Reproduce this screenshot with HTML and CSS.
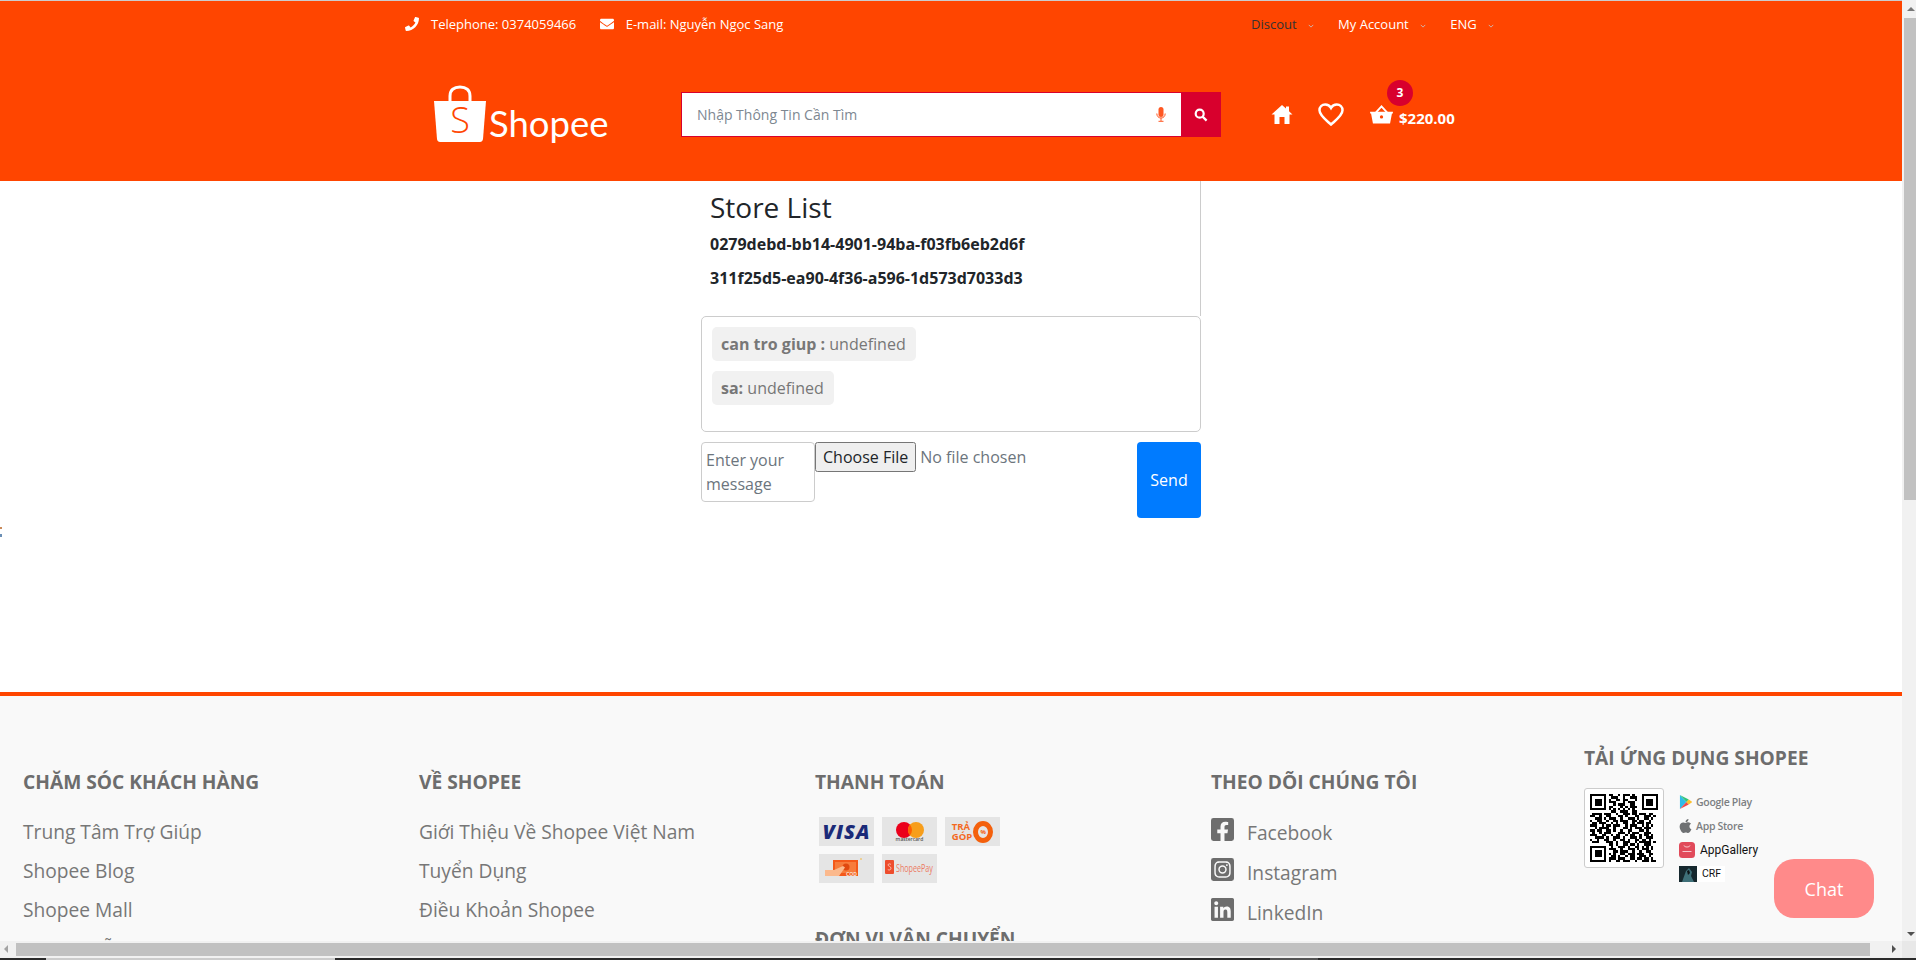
FILE: index.html
```html
<!DOCTYPE html>
<html lang="en">
<head>
  <meta charset="UTF-8" />
  <meta name="viewport" content="width=device-width, initial-scale=1.0"/>
  <title>Shopee Chat</title>
  <link rel="stylesheet" href="styles.css">
</head>
<body>
  <div class="window">
    <div class="window-main">
      <div class="page">
        <header class="site-header">
          <div class="topbar">
            <div class="topbar-left">
              <span class="contact">
                <svg class="contact-icon" viewBox="0 0 512 512"><path d="M493.4 24.6l-104-24c-11.3-2.6-22.9 3.3-27.5 13.9l-48 112c-4.2 9.8-1.4 21.3 6.9 28l60.6 49.6c-36 76.7-98.9 140.5-177.2 177.2l-49.6-60.6c-6.8-8.3-18.2-11.1-28-6.9l-112 48C3.9 366.5-2 378.1.6 389.4l24 104C27.1 504.2 36.7 512 48 512c256.1 0 464-207.5 464-464 0-11.2-7.7-20.9-18.6-23.4z"/></svg>
                Telephone: 0374059466
              </span>
              <span class="contact">
                <svg class="contact-icon" viewBox="0 0 512 512"><path d="M502.3 190.8c3.9-3.1 9.7-.2 9.7 4.7V400c0 26.5-21.5 48-48 48H48c-26.5 0-48-21.5-48-48V195.6c0-5 5.7-7.8 9.7-4.7 22.4 17.4 52.1 39.5 154.1 113.6 21.1 15.4 56.7 47.8 92.2 47.6 35.7.3 72-32.8 92.3-47.6 102-74.1 131.6-96.3 154-113.7zM256 320c23.2.4 56.6-29.2 73.4-41.4 132.7-96.3 142.8-104.7 173.4-128.7 5.8-4.5 9.2-11.5 9.2-18.9v-19c0-26.5-21.5-48-48-48H48C21.5 64 0 85.5 0 112v19c0 7.4 3.4 14.3 9.2 18.9 30.6 23.9 40.7 32.4 173.4 128.7 16.8 12.2 50.2 41.8 73.4 41.4z"/></svg>
                E-mail: Nguyễn Ngọc Sang
              </span>
            </div>
            <div class="topbar-right">
              <span class="top-menu top-menu-dark">Discout <svg class="caret" viewBox="0 0 8 5"><path d="M1 1l3 3 3-3"/></svg></span>
              <span class="top-menu">My Account <svg class="caret" viewBox="0 0 8 5"><path d="M1 1l3 3 3-3"/></svg></span>
              <span class="top-menu">ENG <svg class="caret" viewBox="0 0 8 5"><path d="M1 1l3 3 3-3"/></svg></span>
            </div>
          </div>
          <div class="header-main">
            <div class="logo">
              <svg class="logo-bag" viewBox="0 0 52 58">
                <path class="logo-handle" d="M16 17V11C16 5 20 2 26 2s10 3 10 9v6"/>
                <path class="logo-body" d="M0 16h52l-3 38c-.2 2-1.6 3-3 3H6c-1.5 0-2.8-1-3-3z"/>
                <text class="logo-s" x="26" y="48" text-anchor="middle">S</text>
              </svg>
              <span class="logo-text">Shopee</span>
            </div>
            <form class="search">
              <input class="search-input" type="text" placeholder="Nhập Thông Tin Cần Tìm" />
              <svg class="search-mic" viewBox="0 0 10 15"><rect x="2.5" y="0" width="5" height="10" rx="2.5"/><path d="M.8 6.500c0 2.800 1.800 4.500 4.200 4.500s4.200-1.700 4.200-4.500M5 11v3M2.500 14.300h5"/></svg>
              <button class="search-btn" type="button">
                <svg viewBox="0 0 14 14"><circle cx="5.7" cy="5.7" r="4"/><path d="M8.600 8.600l4 4"/></svg>
              </button>
            </form>
            <div class="header-icons">
              <svg class="icon-home" viewBox="0 0 21 19"><path d="M10.500 0l4 3.600V1.500h3v4.800L21 9.500h-3V19h-5v-7H8v7H3V9.500H0z"/></svg>
              <svg class="icon-heart" viewBox="0 0 26 23"><path d="M13 21.500C8 17 1.500 12.500 1.500 7.300 1.500 4 4 1.500 7.200 1.500c2.400 0 4.600 1.300 5.800 3.500 1.200-2.200 3.400-3.500 5.800-3.500C22 1.500 24.500 4 24.500 7.300c0 5.200-6.500 9.700-11.500 14.200z"/></svg>
              <div class="cart">
                <svg class="icon-basket" viewBox="0 0 24 20"><path d="M0 7h24v2h-1l-2 10.500H3L1 9H0z"/><path class="basket-handle" d="M6 8l6-6.500L18 8"/><circle class="basket-dot" cx="12" cy="12.500" r="1.700"/></svg>
                <span class="cart-total">$220.00</span>
                <span class="cart-badge">3</span>
              </div>
            </div>
          </div>
        </header>

        <main class="chat">
          <section class="store-list">
            <h3 class="store-title">Store List</h3>
            <p class="store-id">0279debd-bb14-4901-94ba-f03fb6eb2d6f</p>
            <p class="store-id">311f25d5-ea90-4f36-a596-1d573d7033d3</p>
          </section>
          <section class="messages">
            <div class="message"><strong>can tro giup :</strong> undefined</div>
            <div class="message"><strong>sa:</strong> undefined</div>
          </section>
          <form class="chat-form">
            <textarea class="chat-input" placeholder="Enter your message"></textarea>
            <input class="chat-file" type="file" />
            <button class="chat-send" type="button">Send</button>
          </form>
        </main>

        <footer class="site-footer">
          <div class="footer-col">
            <h4 class="footer-title">CHĂM SÓC KHÁCH HÀNG</h4>
            <a class="footer-link" href="#">Trung Tâm Trợ Giúp</a>
            <a class="footer-link" href="#">Shopee Blog</a>
            <a class="footer-link" href="#">Shopee Mall</a>
            <a class="footer-link" href="#">Hướng Dẫn Mua Hàng</a>
          </div>
          <div class="footer-col">
            <h4 class="footer-title">VỀ SHOPEE</h4>
            <a class="footer-link" href="#">Giới Thiệu Về Shopee Việt Nam</a>
            <a class="footer-link" href="#">Tuyển Dụng</a>
            <a class="footer-link" href="#">Điều Khoản Shopee</a>
          </div>
          <div class="footer-col">
            <h4 class="footer-title">THANH TOÁN</h4>
            <div class="pay-grid">
              <div class="pay-tile"><span class="pay-visa">VISA</span></div>
              <div class="pay-tile pay-tile-master">
                <svg class="pay-master" viewBox="0 0 28 16"><circle cx="8" cy="8" r="8" fill="#eb001b"/><circle cx="20" cy="8" r="8" fill="#f79e1b"/><path d="M14 2.700a8 8 0 0 1 0 10.600 8 8 0 0 1 0-10.600z" fill="#ff5f00"/></svg>
                <span class="pay-master-text">mastercard</span>
              </div>
              <div class="pay-tile pay-tile-tra"><span class="pay-tra">TRẢ<br>GÓP</span><span class="pay-zero"><span>%</span></span></div>
              <div class="pay-tile">
                <svg class="pay-cod" viewBox="0 0 55 29"><rect x="14" y="6" width="25" height="16" fill="#f4591a"/><rect x="16" y="8" width="21" height="11" fill="#f77c3c"/><circle cx="27" cy="13" r="3.5" fill="#e0490f"/><path d="M6 16h9l9-4 2 1.500-6 8.500H6z" fill="#fbb98d"/><circle cx="42" cy="5" r=".8" fill="#f7b733"/></svg>
                <span class="pay-cod-text">COD</span>
              </div>
              <div class="pay-tile pay-tile-sp">
                <svg class="pay-sp-icon" viewBox="0 0 9 14"><rect width="9" height="14" rx="1" fill="#ee4d2d"/><path d="M6 4.500C5 3.500 3 3.700 3 5s3 1.400 3 3.200S4 10.500 2.800 9.500" fill="none" stroke="#fbd3c4" stroke-width=".8"/></svg>
                <span class="pay-sp">ShopeePay</span>
              </div>
            </div>
            <h4 class="footer-title footer-title-ship">ĐƠN VỊ VẬN CHUYỂN</h4>
          </div>
          <div class="footer-col">
            <h4 class="footer-title">THEO DÕI CHÚNG TÔI</h4>
            <a class="social" href="#">
              <svg class="social-icon" viewBox="0 32 448 448"><path d="M400 32H48A48 48 0 0 0 0 80v352a48 48 0 0 0 48 48h137.25V327.69h-63V256h63v-54.64c0-62.15 37-96.48 93.67-96.48 27.14 0 55.52 4.84 55.52 4.84v61h-31.27c-30.81 0-40.42 19.12-40.42 38.73V256h68.78l-11 71.69h-57.78V480H400a48 48 0 0 0 48-48V80a48 48 0 0 0-48-48z"/></svg>
              Facebook
            </a>
            <a class="social" href="#">
              <svg class="social-icon" viewBox="0 32 448 448"><path d="M224,202.66A53.34,53.34,0,1,0,277.36,256,53.38,53.38,0,0,0,224,202.66Zm124.71-41a54,54,0,0,0-30.41-30.41c-21-8.29-71-6.43-94.3-6.43s-73.25-1.93-94.31,6.43a54,54,0,0,0-30.41,30.41c-8.28,21-6.43,71.05-6.43,94.33S91,329.26,99.32,350.33a54,54,0,0,0,30.41,30.41c21,8.29,71,6.43,94.31,6.43s73.24,1.93,94.3-6.43a54,54,0,0,0,30.41-30.41c8.35-21,6.43-71.05,6.43-94.33S357.1,182.74,348.75,161.67ZM224,338a82,82,0,1,1,82-82A81.9,81.9,0,0,1,224,338Zm85.38-148.3a19.14,19.14,0,1,1,19.13-19.14A19.1,19.1,0,0,1,309.42,189.74ZM400,32H48A48,48,0,0,0,0,80V432a48,48,0,0,0,48,48H400a48,48,0,0,0,48-48V80A48,48,0,0,0,400,32ZM382.88,322c-1.29,25.63-7.14,48.34-25.85,67s-41.4,24.63-67,25.85c-26.41,1.49-105.59,1.49-132,0-25.63-1.29-48.26-7.15-67-25.85s-24.63-41.42-25.85-67c-1.49-26.42-1.49-105.61,0-132,1.29-25.63,7.07-48.34,25.85-67s41.47-24.56,67-25.78c26.41-1.49,105.59-1.49,132,0,25.63,1.29,48.33,7.15,67,25.85s24.63,41.42,25.85,67.07C384.37,216.44,384.37,295.56,382.88,322Z"/></svg>
              Instagram
            </a>
            <a class="social" href="#">
              <svg class="social-icon" viewBox="0 32 448 448"><path d="M416 32H31.9C14.3 32 0 46.5 0 64.3v383.4C0 465.5 14.3 480 31.9 480H416c17.6 0 32-14.5 32-32.3V64.3c0-17.8-14.4-32.3-32-32.3zM135.4 416H69V202.2h66.5V416zm-33.2-243c-21.3 0-38.5-17.3-38.5-38.5S80.9 96 102.2 96c21.2 0 38.5 17.3 38.5 38.5 0 21.3-17.2 38.5-38.5 38.5zm282.1 243h-66.4V312c0-24.8-.5-56.7-34.5-56.7-34.6 0-39.9 27-39.9 54.9V416h-66.4V202.2h63.7v29.2h.9c8.9-16.8 30.6-34.5 62.9-34.5 67.2 0 79.7 44.3 79.7 101.9V416z"/></svg>
              LinkedIn
            </a>
          </div>
          <div class="footer-col footer-col-app">
            <h4 class="footer-title">TẢI ỨNG DỤNG SHOPEE</h4>
            <div class="app-row">
              <div class="qr">
                <svg viewBox="0 0 29 29" shape-rendering="crispEdges">
                  <path fill-rule="evenodd" d="M0 0h7v7H0zM1 1v5h5V1zM22 0h7v7h-7zM23 1v5h5V1zM0 22h7v7H0zM1 23v5h5v-5z"/>
                  <path d="M2 2h3v3H2zM24 2h3v3h-3zM2 24h3v3H2z"/>
                  <path class="qr-data" d="M8 .5h2m2 0h1m1 0h3m1 0h1M9 1.500h3m2 0h1m2 0h3M8 2.500h1m2 0h2m1 0h2m3 0h1M8 3.500h3m3 0h1m1 0h3M10 4.500h1m1 0h3m2 0h2M8 5.500h2m3 0h1m1 0h1m1 0h3M8 6.500h1m1 0h1m1 0h1m1 0h1m1 0h1m1 0h1M9 7.500h2m2 0h3m2 0h2M1 8.500h4m1 0h3m2 0h1m2 0h3m1 0h2m1 0h3m1 0h2M0 9.500h2m2 0h1m2 0h2m3 0h2m1 0h1m3 0h2m2 0h3m1 0h1M2 10.500h3m1 0h1m1 0h3m2 0h1m2 0h3m1 0h1m2 0h2m1 0h1M0 11.500h1m2 0h2m2 0h1m2 0h2m1 0h3m2 0h2m1 0h2m2 0h1M1 12.500h2m1 0h3m2 0h1m1 0h1m2 0h2m2 0h1m1 0h3m1 0h2M0 13.500h3m2 0h1m1 0h2m1 0h3m2 0h1m1 0h3m2 0h1m1 0h1m1 0h1M2 14.500h1m1 0h4m2 0h1m3 0h2m1 0h1m1 0h3m1 0h3M0 15.500h2m1 0h2m2 0h2m1 0h1m2 0h1m2 0h2m3 0h2m1 0h1M1 16.500h1m2 0h1m1 0h3m3 0h3m1 0h1m1 0h3m2 0h3M0 17.500h3m2 0h2m2 0h1m1 0h2m2 0h1m1 0h2m2 0h1m1 0h2m1 0h1M2 18.500h4m1 0h1m2 0h3m1 0h1m2 0h3m1 0h1m2 0h3M0 19.500h1m2 0h1m2 0h2m2 0h1m2 0h2m1 0h1m2 0h2m1 0h2m1 0h1M1 20.500h3m3 0h3m1 0h1m2 0h3m2 0h1m1 0h5m1 0h1M8 21.500h2m1 0h1m2 0h2m1 0h2m1 0h1m2 0h3M9 22.500h1m2 0h3m1 0h1m2 0h2m1 0h1m1 0h1m1 0h1M8 23.500h3m2 0h1m2 0h3m1 0h1m1 0h3m1 0h1M10 24.500h2m1 0h3m2 0h1m2 0h1m2 0h2M8 25.500h1m1 0h1m2 0h2m1 0h3m1 0h3m2 0h2M9 26.500h2m1 0h1m2 0h1m1 0h2m2 0h3m1 0h1M8 27.500h3m1 0h3m2 0h2m1 0h2m1 0h2m1 0h1M8 28.500h1m2 0h2m1 0h3m2 0h1m2 0h3m1 0h2"/>
                </svg>
              </div>
              <div class="stores">
                <div class="store-row">
                  <svg class="store-icon" viewBox="1 1 14 15"><path d="M2 1l7 7.500L2 16z" fill="#2fbce9"/><path d="M2 1l9.500 4.800L9 8.500z" fill="#34c37a"/><path d="M2 16l9.500-4.800L9 8.500z" fill="#ee4a4a"/><path d="M11.500 5.800l4 2.700-4 2.700L9 8.500z" fill="#fbc02d"/></svg>
                  <span class="store-name">Google Play</span>
                </div>
                <div class="store-row">
                  <svg class="store-icon" viewBox="0 0 384 512"><path fill="#6f7173" d="M318.7 268.7c-.2-36.7 16.4-64.4 50-84.8-18.8-26.9-47.2-41.7-84.7-44.6-35.5-2.800-74.3 20.7-88.5 20.7-15 0-49.4-19.7-76.4-19.7C63.3 141.2 4 184.8 4 273.5q0 39.3 14.4 81.2c12.8 36.7 59 126.7 107.2 125.2 25.2-.6 43-17.9 75.8-17.9 31.8 0 48.3 17.9 76.4 17.9 48.6-.7 90.4-82.5 102.6-119.3-65.2-30.7-61.7-90-61.7-91.9zm-56.6-164.2c27.3-32.4 24.8-61.9 24-72.5-24.1 1.4-52 16.4-67.9 34.9-17.5 19.8-27.8 44.3-25.6 71.9 26.1 2 49.9-11.4 69.5-34.3z"/></svg>
                  <span class="store-name">App Store</span>
                </div>
                <div class="store-row">
                  <svg class="gallery-icon" viewBox="0 0 16 16"><rect width="16" height="16" rx="3.5" fill="#e14a5a"/><path d="M5 3.500c.5 2 5.500 2 6 0" fill="none" stroke="#fff" stroke-width=".7"/><path d="M3.500 9.500h9" stroke="#fbd7da" stroke-width=".9"/></svg>
                  <span class="store-name store-name-dark">AppGallery</span>
                </div>
                <div class="store-row">
                  <svg class="store-icon-crf" viewBox="0 0 18 16"><rect width="18" height="16" fill="#16282e"/><path d="M3 16L7 5l3-3 3 4-1 4 3 6z" fill="#3e6f78"/><path d="M8 5l2-1 1 3-2 2z" fill="#0c1215"/></svg>
                  <span class="store-name store-name-crf">CRF</span>
                </div>
              </div>
            </div>
          </div>
        </footer>
      </div>
      <div class="vscroll">
        <span class="arrow arrow-up"></span>
        <div class="vscroll-thumb"></div>
        <span class="arrow arrow-down"></span>
      </div>
    </div>
    <div class="hscroll">
      <span class="arrow arrow-left"></span>
      <div class="hscroll-thumb"></div>
      <span class="arrow arrow-right"></span>
      <div class="hscroll-corner"></div>
    </div>
    <div class="strip">
      <span class="strip-a"></span>
      <span class="strip-b"></span>
      <span class="strip-c"></span>
      <span class="strip-d"></span>
      <span class="strip-e"></span>
    </div>
  </div>
  <button class="chat-bubble" type="button">Chat</button>
  <span class="edge-mark edge-mark-a"></span>
  <span class="edge-mark edge-mark-b"></span>
</body>
</html>
```

FILE: styles.css
```css
* {
  box-sizing: border-box;
  font-family: 'Open Sans', 'Noto Sans', sans-serif;
}

body {
  margin: 0;
  height: 960px;
  overflow: hidden;
  background: #fff;
}

.window {
  height: 960px;
  display: flex;
  flex-direction: column;
}

.window-main {
  display: flex;
  height: 941px;
}

.page {
  flex: 1;
  min-width: 0;
  overflow: hidden;
}

/* header */
.site-header {
  height: 181px;
  border-top: 1px solid #ccc;
  background: #ff4500;
  color: #fff;
}

.topbar {
  height: 46px;
  padding: 0 0 0 405px;
  display: flex;
  align-items: center;
  font-size: 13px;
}

.topbar-left {
  display: flex;
  gap: 23.5px;
  width: 846px;
}

.contact {
  display: flex;
  align-items: center;
  gap: 12px;
}

.contact-icon {
  width: 14px;
  height: 14px;
  fill: #fff;
}

.topbar-right {
  display: flex;
  gap: 24.5px;
}

.top-menu {
  display: flex;
  align-items: center;
  gap: 10px;
  font-size: 13px;
}

.top-menu-dark {
  color: #333;
}

.caret {
  width: 6px;
  height: 4px;
  margin-top: 3px;
  margin-left: 1px;
  fill: none;
  stroke: #c9bcb6;
  stroke-width: 1.2;
}

.header-main {
  display: flex;
  align-items: flex-start;
  height: 134px;
  padding-left: 434px;
}

.logo {
  display: flex;
  align-items: flex-start;
  width: 247px;
  height: 62px;
  margin-top: 38px;
}

.logo-bag {
  width: 52px;
  height: 58px;
  flex: none;
}

.logo-handle {
  fill: none;
  stroke: #fff;
  stroke-width: 3;
}

.logo-body {
  fill: #fff;
}

.logo-s {
  font-size: 36px;
  font-weight: 300;
  fill: #ff4500;
}

.logo-text {
  font-family: 'Lato', sans-serif;
  font-size: 36.5px;
  font-weight: 400;
  line-height: 38px;
  margin-top: 19px;
  margin-left: 3px;
}

.search {
  position: relative;
  display: flex;
  width: 540px;
  height: 45px;
  margin-top: 45px;
}

.search-input {
  flex: 1;
  height: 45px;
  padding: 0 40px 0 15px;
  border: 1px solid #d8002d;
  border-right: none;
  outline: none;
  background: #fff;
  font-size: 14px;
  color: #495057;
}

.search-input::placeholder {
  color: #7d8791;
}

.search-mic {
  position: absolute;
  right: 55px;
  top: 15px;
  width: 10px;
  height: 15px;
  fill: #ff5722;
  stroke: #ff5722;
  stroke-width: 0;
}

.search-mic path {
  fill: none;
  stroke-width: 1;
}

.search-btn {
  width: 40px;
  height: 45px;
  padding: 0;
  border: none;
  background: #d8002d;
  display: flex;
  align-items: center;
  justify-content: center;
}

.search-btn svg {
  width: 14px;
  height: 14px;
  fill: none;
  stroke: #fff;
  stroke-width: 2.2;
}

.header-icons {
  display: flex;
  align-items: center;
  height: 45px;
  margin-top: 45px;
  margin-left: 50px;
}

.icon-home {
  width: 22px;
  height: 19px;
  fill: #fff;
}

.icon-heart {
  width: 26px;
  height: 23px;
  margin-left: 25px;
  fill: none;
  stroke: #fff;
  stroke-width: 2.5;
}

.cart {
  position: relative;
  display: flex;
  align-items: center;
  margin-left: 26px;
}

.icon-basket {
  width: 23px;
  height: 19px;
  fill: #fff;
}

.basket-handle {
  fill: none;
  stroke: #fff;
  stroke-width: 2;
}

.basket-dot {
  fill: #ff4500;
}

.cart-total {
  margin-left: 6px;
  margin-top: 7px;
  font-size: 15px;
  font-weight: 700;
}

.cart-badge {
  position: absolute;
  left: 17px;
  top: -21px;
  width: 26px;
  height: 26px;
  border-radius: 50%;
  background: #d8002d;
  font-size: 12px;
  font-weight: 700;
  line-height: 26px;
  text-align: center;
}

/* chat */
.chat {
  width: 500px;
  height: 511px;
  margin: 0 auto;
}

.store-list {
  height: 135px;
  padding-left: 9px;
  border-right: 1px solid #ccc;
  color: #212529;
}

.store-title {
  margin: 0 0 -1px;
  font-size: 28px;
  font-weight: 400;
  line-height: 52px;
}

.store-id {
  margin: 0 0 10px;
  font-size: 16px;
  font-weight: 700;
  line-height: 24px;
}

.messages {
  height: 116px;
  padding: 10px;
  border: 1px solid #ccc;
  border-radius: 5px;
  display: flex;
  flex-direction: column;
  align-items: flex-start;
  gap: 10px;
}

.message {
  height: 34px;
  padding: 0 10px 0 9px;
  border-radius: 5px;
  background: #f1f1f1;
  color: #777;
  font-size: 16px;
  line-height: 34px;
}

.chat-form {
  display: flex;
  align-items: flex-start;
  margin-top: 10px;
}

.chat-input {
  width: 114px;
  height: 60px;
  padding: 5px 4px;
  border: 1px solid #ccc;
  border-radius: 4px;
  outline: none;
  resize: none;
  font-size: 16px;
  line-height: 24px;
  color: #495057;
}

.chat-input::placeholder {
  color: #6c757d;
}

.chat-file {
  flex: 1;
  min-width: 0;
  font-size: 16px;
  color: #6c757d;
}

.chat-file::file-selector-button {
  height: 30px;
  margin-right: 4px;
  font-family: 'Open Sans', sans-serif;
  font-size: 16px;
  color: #212529;
}

.chat-send {
  width: 64px;
  height: 76px;
  border: none;
  border-radius: 4px;
  background: #007bff;
  color: #fff;
  font-size: 16px;
}

/* footer */
.site-footer {
  display: flex;
  border-top: 4px solid #ff4500;
  background: #f9f9f9;
  height: 400px;
  padding: 0 0 0 23px;
}

.footer-col {
  width: 396px;
  padding-top: 72px;
  flex: none;
}

.footer-col-app {
  width: 300px;
  margin-left: -23px;
  padding-top: 48px;
}

.footer-title {
  margin: 0 0 16px;
  font-size: 19.2px;
  font-weight: 700;
  line-height: 28px;
  color: #6d6d6d;
}

.footer-link {
  display: block;
  height: 39px;
  font-size: 19.2px;
  line-height: 39px;
  color: #777;
  text-decoration: none;
}

.pay-grid {
  display: grid;
  grid-template-columns: repeat(3, 55px);
  grid-auto-rows: 29px;
  gap: 8px;
  margin-left: 4px;
  margin-top: 21px;
}

.pay-tile {
  position: relative;
  display: flex;
  flex-direction: column;
  align-items: center;
  justify-content: center;
  background: #e5e5e5;
  overflow: hidden;
}

.pay-visa {
  font-size: 20px;
  font-weight: 800;
  font-style: italic;
  letter-spacing: 1px;
  color: #1a2a78;
  line-height: 1;
}

.pay-tile-master {
  justify-content: flex-start;
  padding-top: 5px;
}

.pay-master {
  width: 28px;
  height: 16px;
}

.pay-master-text {
  position: absolute;
  bottom: 4px;
  font-size: 5px;
  font-weight: 600;
  color: #555;
  line-height: 1;
}

.pay-tile-tra {
  flex-direction: row;
  gap: 1px;
}

.pay-tra {
  font-size: 9.5px;
  font-weight: 700;
  line-height: 10px;
  color: #f4691e;
}

.pay-zero {
  width: 20px;
  height: 22px;
  border: 5px solid #f4600c;
  border-radius: 50%;
  display: flex;
  align-items: center;
  justify-content: center;
}

.pay-zero span {
  font-size: 6px;
  line-height: 8px;
  font-weight: 700;
  color: #f4600c;
}

.pay-cod {
  width: 55px;
  height: 29px;
}

.pay-cod-text {
  position: absolute;
  left: 27px;
  top: 18px;
  font-size: 5px;
  font-weight: 700;
  color: #f9e0d2;
  line-height: 1;
}

.pay-tile-sp {
  flex-direction: row;
  justify-content: flex-start;
  gap: 2px;
  padding-left: 3px;
}

.pay-sp-icon {
  width: 9px;
  height: 14px;
  margin-bottom: 3px;
  flex: none;
}

.pay-sp {
  margin-bottom: 3px;
  font-size: 11px;
  color: #ec7a62;
  transform: scaleX(0.65);
  transform-origin: left center;
}

.footer-title-ship {
  margin-top: 42px;
}

.social {
  display: flex;
  align-items: center;
  gap: 13px;
  height: 40px;
  font-size: 19.2px;
  color: #777;
  text-decoration: none;
}

.social-icon {
  width: 23px;
  height: 23px;
  margin-bottom: 5px;
  fill: #6d6d6d;
  flex: none;
}

.app-row {
  display: flex;
  gap: 15px;
  margin-top: 1px;
}

.qr {
  width: 80px;
  height: 80px;
  padding: 5px;
  border: 1px solid #ccc;
  border-radius: 3px;
  background: #fff;
}

.qr svg {
  display: block;
  width: 68px;
  height: 68px;
}

.qr-data {
  fill: none;
  stroke: #000;
  stroke-width: 1;
}

.stores {
  display: flex;
  flex-direction: column;
  gap: 8px;
  margin-top: 6px;
}

.store-row {
  display: flex;
  align-items: center;
  gap: 4px;
  height: 16px;
}

.store-icon {
  width: 13px;
  height: 16px;
  flex: none;
}

.store-icon-crf {
  width: 18px;
  height: 16px;
  flex: none;
}

.gallery-icon {
  width: 16px;
  height: 16px;
  flex: none;
}

.store-name {
  font-size: 10.5px;
  font-weight: 600;
  color: #7c7f82;
  letter-spacing: -0.3px;
}

.store-name-dark {
  margin-left: 1px;
  font-family: 'Roboto', sans-serif;
  font-size: 12px;
  font-weight: 400;
  letter-spacing: 0;
  color: #111;
}

.store-name-crf {
  padding: 0 4px 0 5px;
  margin-left: -4px;
  background: #fff;
  font-family: 'Roboto', sans-serif;
  font-weight: 400;
  letter-spacing: 0;
  color: #111;
  line-height: 16px;
}

.chat-bubble {
  position: fixed;
  left: 1774px;
  top: 859px;
  width: 100px;
  height: 59px;
  border: none;
  border-radius: 20px;
  background: #ff8a8a;
  color: #fff;
  font-size: 18px;
}

.edge-mark {
  position: fixed;
  left: 0;
  width: 2px;
  height: 2px;
}

.edge-mark-a {
  top: 527px;
  background: #c98a5a;
}

.edge-mark-b {
  top: 534px;
  height: 3px;
  background: #6b8fb5;
}

/* fake browser chrome */
.vscroll {
  position: relative;
  width: 14px;
  background: #f1f1f1;
  padding: 18px 0 0 2px;
}

.vscroll-thumb {
  height: 482px;
  background: #c1c1c1;
}

.hscroll {
  position: relative;
  height: 17px;
  padding: 2px 46px 2px 16px;
  background: #f1f1f1;
}

.hscroll-thumb {
  height: 13px;
  background: #c1c1c1;
}

.hscroll-corner {
  position: absolute;
  right: 0;
  top: 0;
  width: 14px;
  height: 17px;
  background: #e8e8e8;
}

.arrow {
  position: absolute;
  width: 0;
  height: 0;
  border: 4px solid transparent;
}

.arrow-up {
  top: 7px;
  left: 5px;
  border-top: none;
  border-bottom-color: #777;
}

.arrow-down {
  bottom: 5px;
  left: 5px;
  border-bottom: none;
  border-top-color: #505050;
}

.arrow-left {
  left: 4px;
  top: 4px;
  border-left: none;
  border-right-color: #a3a3a3;
}

.arrow-right {
  right: 20px;
  top: 4px;
  border-right: none;
  border-left-color: #505050;
}

.strip {
  display: flex;
  height: 2px;
  background: #2b2b2b;
}

.strip-a {
  width: 46px;
}

.strip-b {
  width: 289px;
  background: #ccc;
}

.strip-c {
  width: 935px;
}

.strip-d {
  width: 48px;
  background: #555;
}

.strip-e {
  flex: 1;
}
```
